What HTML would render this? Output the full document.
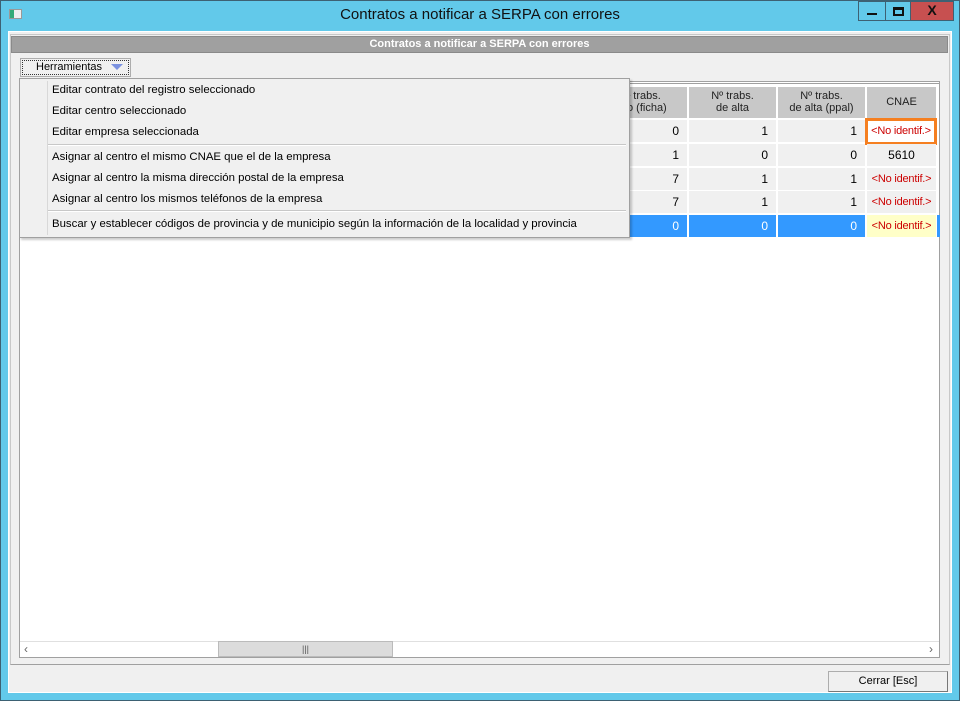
<!DOCTYPE html>
<html><head><meta charset="utf-8"><style>
*{margin:0;padding:0;box-sizing:border-box}
body{width:960px;height:701px;position:relative;overflow:hidden;font-family:"Liberation Sans",sans-serif;background:#62c9ea}
.a{position:absolute}
.win{left:0;top:0;width:960px;height:701px;border:1px solid #3d6173;background:#62c9ea}
.title{left:0;top:6px;width:960px;text-align:center;font-size:15px;color:#111}
.client{left:8px;top:31px;width:944px;height:662px;background:#f0f0f0;border:1px solid #fff}
.hdr{left:11px;top:36px;width:937px;height:17px;background:#a0a0a0;border:1px solid #8a8a8a;color:#fff;font-weight:bold;font-size:11px;text-align:center;line-height:14px}
.grid{left:19px;top:81px;width:921px;height:577px;background:#fff;border:1px solid #a0a0a0}
.cell{position:absolute;height:22px;font-size:12px;line-height:22px;text-align:right;padding-right:8px;background:#f0f0f0;color:#000;white-space:nowrap}
.hc{position:absolute;top:87px;height:31px;background:#c8c8c8;font-size:11px;text-align:center;line-height:12px;padding-top:3px;color:#222}
.red{color:#c00;text-align:center;padding:0;font-size:11px;letter-spacing:-0.2px}
.menu{left:19px;top:78px;width:611px;height:160px;background:#f0f0f0;border:1px solid #a0a0a0;box-shadow:2px 2px 2px rgba(0,0,0,.2)}
.mi{position:absolute;left:32px;font-size:11.4px;color:#000;white-space:nowrap}
.sep{position:absolute;left:28px;width:578px;height:2px;border-top:1px solid #c8c8c8;border-bottom:1px solid #fff}
</style></head><body>
<div class="a win"></div>
<div class="a" style="left:9px;top:9px;width:13px;height:10px;background:#eee;border:1px solid #999"><div style="width:4px;height:8px;background:#3a7"></div></div>
<div class="a title">Contratos a notificar a SERPA con errores</div>
<div class="a" style="left:858px;top:1px;width:28px;height:20px;border:1px solid #3d6173;background:#62c9ea"><div style="margin:11px auto 0;width:10px;height:2px;background:#111"></div></div>
<div class="a" style="left:885px;top:1px;width:26px;height:20px;border:1px solid #3d6173;background:#62c9ea"><div style="margin:5px auto 0;width:11px;height:9px;border:2px solid #111;border-top-width:3px"></div></div>
<div class="a" style="left:910px;top:1px;width:44px;height:20px;border:1px solid #3d6173;background:#c75050;color:#111;font-weight:bold;font-size:14px;text-align:center;line-height:17px">X</div>
<div class="a client"></div>
<div class="a" style="left:10px;top:34px;width:940px;height:631px;border:1px solid #c8c8c8;border-bottom-color:#a0a0a0"></div>
<div class="a hdr">Contratos a notificar a SERPA con errores</div>
<div class="a" style="left:20px;top:58px;width:111px;height:19px;border:1px solid #adadad;background:#f0f0f0;font-size:11px;line-height:17px;padding-left:15px;outline:1px dotted #333;outline-offset:-3px">Herramientas <span style="display:inline-block;width:0;height:0;border-left:6px solid transparent;border-right:6px solid transparent;border-top:6px solid #7b92e0;margin-left:6px;vertical-align:middle"></span></div>
<div class="a grid"></div>
<div class="a" style="left:19px;top:83px;width:921px;height:2px;border-top:1px solid #a0a0a0"></div>
<div class="hc" style="left:600px;width:87px">ª trabs.<br>tro (ficha)</div>
<div class="hc" style="left:689px;width:87px">Nº trabs.<br>de alta</div>
<div class="hc" style="left:778px;width:87px">Nº trabs.<br>de alta (ppal)</div>
<div class="hc" style="left:867px;width:69px;line-height:25px;padding-top:3px">CNAE</div>
<div class="cell" style="left:600px;top:120px;width:87px">0</div><div class="cell" style="left:689px;top:120px;width:87px">1</div><div class="cell" style="left:778px;top:120px;width:87px">1</div>
<div class="cell red" style="left:865px;top:118px;width:72px;height:27px;line-height:21px;border:3px solid #f57f20;background:#fff">&lt;No identif.&gt;</div>
<div class="cell" style="left:600px;top:144px;width:87px">1</div><div class="cell" style="left:689px;top:144px;width:87px">0</div><div class="cell" style="left:778px;top:144px;width:87px">0</div><div class="cell" style="left:867px;top:144px;width:69px;text-align:center;padding:0">5610</div>
<div class="cell" style="left:600px;top:168px;width:87px">7</div><div class="cell" style="left:689px;top:168px;width:87px">1</div><div class="cell" style="left:778px;top:168px;width:87px">1</div><div class="cell red" style="left:867px;top:168px;width:69px">&lt;No identif.&gt;</div>
<div class="cell" style="left:600px;top:191px;width:87px">7</div><div class="cell" style="left:689px;top:191px;width:87px">1</div><div class="cell" style="left:778px;top:191px;width:87px">1</div><div class="cell red" style="left:867px;top:191px;width:69px">&lt;No identif.&gt;</div>
<div class="cell" style="left:600px;top:215px;width:87px;background:#3399ff;color:#fff">0</div><div class="cell" style="left:689px;top:215px;width:87px;background:#3399ff;color:#fff">0</div><div class="cell" style="left:778px;top:215px;width:87px;background:#3399ff;color:#fff">0</div><div class="cell red" style="left:867px;top:215px;width:69px;background:#ffffc8">&lt;No identif.&gt;</div>
<div class="a" style="left:937px;top:215px;width:3px;height:22px;background:#3399ff"></div>
<div class="a" style="left:20px;top:641px;width:919px;height:16px;background:#fff;border-top:1px solid #e0e0e0"></div>
<div class="a" style="left:24px;top:642px;font-size:12px;color:#666">‹</div>
<div class="a" style="left:929px;top:642px;font-size:12px;color:#666">›</div>
<div class="a" style="left:218px;top:641px;width:175px;height:16px;background:#dcdcdc;border:1px solid #bbb;font-size:9px;text-align:center;line-height:14px;color:#555">|||</div>
<div class="a" style="left:828px;top:671px;width:120px;height:21px;border:1px solid #adadad;border-right-color:#777;border-bottom-color:#777;background:#f0f0f0;font-size:11px;text-align:center;line-height:19px">Cerrar [Esc]</div>
<div class="a menu">
<div class="a" style="left:27px;top:2px;width:1px;height:154px;background:#d8d8d8"></div>
<div class="mi" style="top:5px">Editar contrato del registro seleccionado</div>
<div class="mi" style="top:26px">Editar centro seleccionado</div>
<div class="mi" style="top:47px">Editar empresa seleccionada</div>
<div class="sep" style="top:65px"></div>
<div class="mi" style="top:72px">Asignar al centro el mismo CNAE que el de la empresa</div>
<div class="mi" style="top:93px">Asignar al centro la misma dirección postal de la empresa</div>
<div class="mi" style="top:114px">Asignar al centro los mismos teléfonos de la empresa</div>
<div class="sep" style="top:131px"></div>
<div class="mi" style="top:139px">Buscar y establecer códigos de provincia y de municipio según la información de la localidad y provincia</div>
</div>
</body></html>
